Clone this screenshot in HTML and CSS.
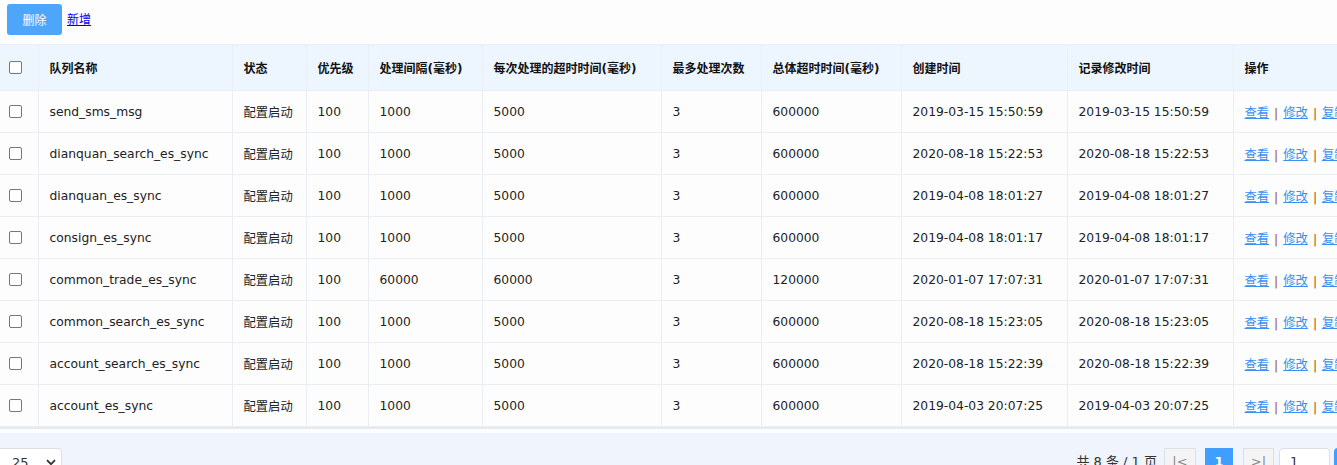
FILE: index.html
```html
<!DOCTYPE html>
<html lang="zh">
<head>
<meta charset="utf-8">
<title>队列管理</title>
<link rel="stylesheet" href="styles.css">
</head>
<body>
<div class="page">
  <div class="toolbar">
    <button class="btn-del" type="button">删除</button><a class="add-link" href="#">新增</a>
  </div>
  <table class="grid">
    <colgroup>
      <col class="c-chk"><col class="c-name"><col class="c-status"><col class="c-pri"><col class="c-int"><col class="c-to"><col class="c-max"><col class="c-total"><col class="c-ct"><col class="c-mt"><col class="c-op">
    </colgroup>
    <thead>
      <tr>
        <th><span class="chk"></span></th>
        <th>队列名称</th><th>状态</th><th>优先级</th><th>处理间隔(毫秒)</th><th>每次处理的超时时间(毫秒)</th><th>最多处理次数</th><th>总体超时时间(毫秒)</th><th>创建时间</th><th>记录修改时间</th><th>操作</th>
      </tr>
    </thead>
    <tbody>
      <tr><td><span class="chk"></span></td><td>send_sms_msg</td><td>配置启动</td><td>100</td><td>1000</td><td>5000</td><td>3</td><td>600000</td><td>2019-03-15 15:50:59</td><td>2019-03-15 15:50:59</td><td class="ops"><a href="#">查看</a><span class="sep">|</span><a href="#">修改</a><span class="sep">|</span><a href="#">复制</a></td></tr>
      <tr><td><span class="chk"></span></td><td>dianquan_search_es_sync</td><td>配置启动</td><td>100</td><td>1000</td><td>5000</td><td>3</td><td>600000</td><td>2020-08-18 15:22:53</td><td>2020-08-18 15:22:53</td><td class="ops"><a href="#">查看</a><span class="sep">|</span><a href="#">修改</a><span class="sep">|</span><a href="#">复制</a></td></tr>
      <tr><td><span class="chk"></span></td><td>dianquan_es_sync</td><td>配置启动</td><td>100</td><td>1000</td><td>5000</td><td>3</td><td>600000</td><td>2019-04-08 18:01:27</td><td>2019-04-08 18:01:27</td><td class="ops"><a href="#">查看</a><span class="sep">|</span><a href="#">修改</a><span class="sep">|</span><a href="#">复制</a></td></tr>
      <tr><td><span class="chk"></span></td><td>consign_es_sync</td><td>配置启动</td><td>100</td><td>1000</td><td>5000</td><td>3</td><td>600000</td><td>2019-04-08 18:01:17</td><td>2019-04-08 18:01:17</td><td class="ops"><a href="#">查看</a><span class="sep">|</span><a href="#">修改</a><span class="sep">|</span><a href="#">复制</a></td></tr>
      <tr><td><span class="chk"></span></td><td>common_trade_es_sync</td><td>配置启动</td><td>100</td><td>60000</td><td>60000</td><td>3</td><td>120000</td><td>2020-01-07 17:07:31</td><td>2020-01-07 17:07:31</td><td class="ops"><a href="#">查看</a><span class="sep">|</span><a href="#">修改</a><span class="sep">|</span><a href="#">复制</a></td></tr>
      <tr><td><span class="chk"></span></td><td>common_search_es_sync</td><td>配置启动</td><td>100</td><td>1000</td><td>5000</td><td>3</td><td>600000</td><td>2020-08-18 15:23:05</td><td>2020-08-18 15:23:05</td><td class="ops"><a href="#">查看</a><span class="sep">|</span><a href="#">修改</a><span class="sep">|</span><a href="#">复制</a></td></tr>
      <tr><td><span class="chk"></span></td><td>account_search_es_sync</td><td>配置启动</td><td>100</td><td>1000</td><td>5000</td><td>3</td><td>600000</td><td>2020-08-18 15:22:39</td><td>2020-08-18 15:22:39</td><td class="ops"><a href="#">查看</a><span class="sep">|</span><a href="#">修改</a><span class="sep">|</span><a href="#">复制</a></td></tr>
      <tr><td><span class="chk"></span></td><td>account_es_sync</td><td>配置启动</td><td>100</td><td>1000</td><td>5000</td><td>3</td><td>600000</td><td>2019-04-03 20:07:25</td><td>2019-04-03 20:07:25</td><td class="ops"><a href="#">查看</a><span class="sep">|</span><a href="#">修改</a><span class="sep">|</span><a href="#">复制</a></td></tr>
    </tbody>
  </table>
  <div class="grid-bottom"></div>
  <div class="pager">
    <div class="size-select"><span>25</span>
      <svg class="chev" width="10" height="7" viewBox="0 0 10 7"><path d="M1 1.2 L5 5.2 L9 1.2" fill="none" stroke="#333" stroke-width="1.8"/></svg>
    </div>
    <div class="pager-right">
      <span class="total">共 8 条 / 1 页</span>
      <span class="pbtn first">|&lt;</span>
      <span class="pbtn active">1</span>
      <span class="pbtn last">&gt;|</span>
      <span class="pinput">1</span>
      <span class="pgo">GO</span>
    </div>
  </div>
</div>
</body>
</html>
```
FILE: styles.css
```css
html, body {
  margin: 0;
  padding: 0;
}
body {
  background: #fdfdfd;
  overflow: hidden;
  font-family: "DejaVu Sans", "Noto Sans CJK SC", sans-serif;
  font-size: 12px;
  color: #222;
}
.page {
  width: 1374px;
}
.toolbar {
  height: 44px;
  box-sizing: border-box;
  padding: 4px 0 0 7px;
  display: flex;
  align-items: flex-start;
}
.btn-del {
  width: 55px;
  height: 31px;
  border: none;
  border-radius: 3px;
  background: #4ea6fb;
  color: #fff;
  font-family: "DejaVu Sans", "Noto Sans CJK SC", sans-serif;
  font-size: 12px;
  padding: 0;
}
.add-link {
  margin-left: 5px;
  margin-top: 7px;
  color: #0000ee;
  font-size: 12px;
  line-height: 18px;
}
.grid {
  border-collapse: collapse;
  table-layout: fixed;
  width: 100%;
}
.c-chk { width: 38px; }
.c-name { width: 194px; }
.c-status { width: 74px; }
.c-pri { width: 62px; }
.c-int { width: 114px; }
.c-to { width: 179px; }
.c-max { width: 100px; }
.c-total { width: 140px; }
.c-ct { width: 166px; }
.c-mt { width: 166px; }
.c-op { width: 141px; }
.grid th, .grid td {
  border: 1px solid #ebeef5;
  padding: 0 0 0 11px;
  text-align: left;
  vertical-align: middle;
  white-space: nowrap;
  overflow: hidden;
}
.grid td {
  font-size: 12.3px;
}
.grid th:first-child, .grid td:first-child {
  border-left: none;
  padding-left: 9px;
}
.grid th {
  height: 45px;
  background: #edf5ff;
  font-weight: bold;
  color: #111;
}
.grid td {
  height: 41px;
  background: #fdfdfd;
}
.chk {
  display: block;
  width: 11px;
  height: 11px;
  border: 1px solid #777;
  border-radius: 2px;
  background: #fff;
}
.ops a {
  color: #3b8ff0;
  text-decoration: underline;
}
.ops .sep {
  color: #a0561d;
  padding: 0 5px;
}
.grid-bottom {
  height: 2px;
  background: #e6e9ef;
  margin-bottom: 4px;
}
.pager {
  background: #f0f4fc;
  height: 40px;
  padding-top: 15px;
  display: flex;
  align-items: flex-start;
  justify-content: space-between;
}
.size-select {
  width: 62px;
  height: 28px;
  box-sizing: border-box;
  border: 1px solid #dcdfe6;
  border-left: none;
  border-radius: 0 4px 0 0;
  background: #fff;
  display: flex;
  align-items: center;
  justify-content: space-between;
  padding: 0 5px 0 12px;
  font-size: 13px;
  color: #333;
}
.pager-right {
  display: flex;
  align-items: flex-start;
}
.total {
  font-size: 13px;
  margin-top: 3px;
  margin-right: 6px;
  color: #333;
}
.pbtn {
  box-sizing: border-box;
  height: 28px;
  border: 1px solid #dcdfe6;
  background: #f4f4f5;
  color: #888;
  display: flex;
  justify-content: center;
  padding-top: 5px;
  font-size: 13px;
}
.first { width: 32px; margin-left: 1px; }
.active {
  width: 28px;
  margin-left: 9px;
  background: #409eff;
  border-color: #409eff;
  color: #fff;
  font-weight: bold;
}
.last { width: 31px; margin-left: 10px; }
.pinput {
  box-sizing: border-box;
  width: 51px;
  height: 28px;
  margin-left: 5px;
  border: 1px solid #dcdfe6;
  border-radius: 4px;
  background: #fff;
  padding: 5px 0 0 10px;
  font-size: 13px;
  color: #333;
}
.pgo {
  box-sizing: border-box;
  width: 40px;
  height: 28px;
  margin-left: 4px;
  background: #409eff;
  border-radius: 4px;
  color: #fff;
  padding: 5px 0 0 8px;
  font-size: 13px;
}
```
